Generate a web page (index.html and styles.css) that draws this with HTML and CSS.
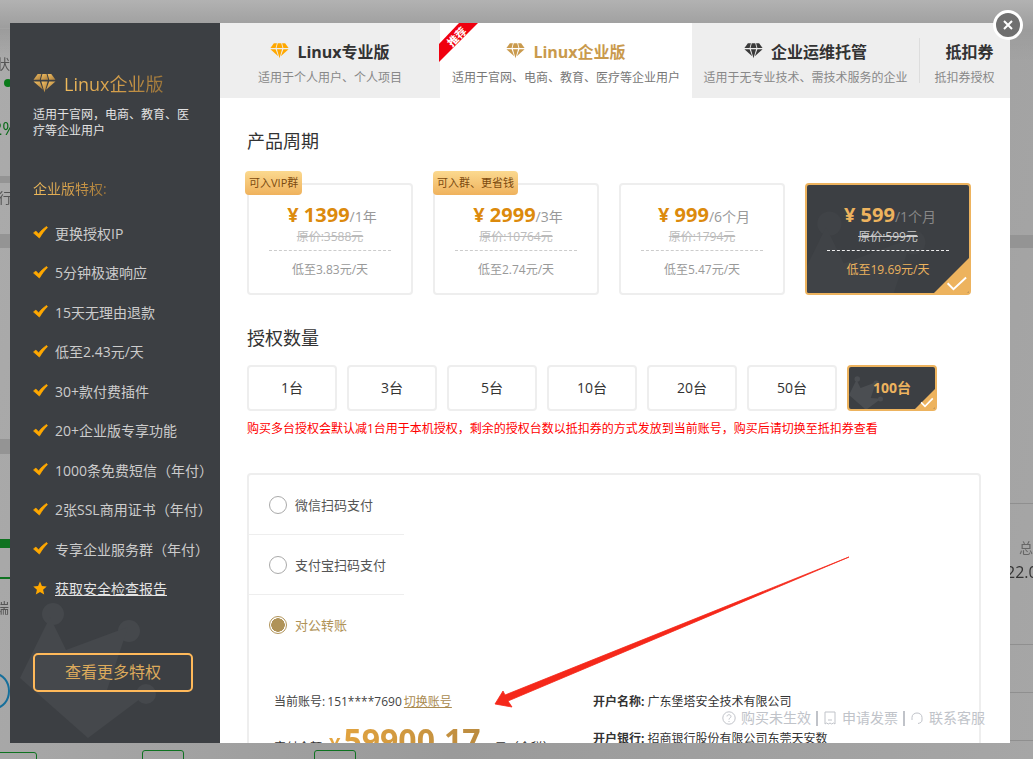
FILE: index.html
```html
<!DOCTYPE html>
<html lang="zh-CN">
<head>
  <meta charset="UTF-8">
  <title>Linux企业版</title>
  <link rel="stylesheet" href="styles.css">
</head>
<body>
  <svg class="defs" width="0" height="0">
    <defs>
      <linearGradient id="gold" x1="0" y1="0" x2="1" y2="1">
        <stop offset="0" stop-color="#f4c062"/>
        <stop offset="1" stop-color="#a87c3c"/>
      </linearGradient>
      <symbol id="gem" viewBox="1 1 22 18">
        <path d="M5.5 1 1.5 6.5H7.5L9 1Z"/>
        <path d="M10 1H14L15.5 6.5H8.5Z"/>
        <path d="M15 1H18.5L22.5 6.5H16.5Z"/>
        <path d="M1.5 8H7.5L10.5 16Z"/>
        <path d="M9 8H15L12 18.5Z"/>
        <path d="M16.5 8H22.5L13.5 16Z"/>
      </symbol>
      <symbol id="tick" viewBox="0 0 16 14">
        <path d="M0.5 7.5 3 5.5 6 8.5C8 5.5 11 3 14.5 0.5L15.5 1.8C12 5 9.5 8.5 6.8 13Z"/>
      </symbol>
      <symbol id="crown" viewBox="0 0 136 135">
        <circle cx="33" cy="11" r="11"/>
        <circle cx="109" cy="28" r="11"/>
        <circle cx="126" cy="91" r="10"/>
        <path d="M0 75 30 14 46 47 108 24 87 87 128 90 68 135Z"/>
      </symbol>
    </defs>
  </svg>

  <!-- page behind the dialog -->
  <div class="backdrop">
    <span class="bg-line bg-l1"></span>
    <span class="bg-band bg-b1"></span>
    <span class="bg-band bg-b2"></span>
    <span class="bg-band bg-b3"></span>
    <span class="bg-band bg-b4"></span>
    <span class="bg-line bg-r1"></span>
    <span class="bg-line bg-r2"></span>
    <span class="bg-line bg-r3"></span>
    <span class="bg-line bg-r4"></span>
    <span class="bg-text bg-t1">状</span>
    <span class="bg-dot"></span>
    <span class="bg-text bg-t2">2%</span>
    <span class="bg-text bg-t3">行</span>
    <span class="bg-text bg-t4">端</span>
    <span class="bg-text bg-t5">总</span>
    <span class="bg-text bg-t6">22.0</span>
    <span class="bg-green bg-g1"></span>
    <span class="bg-green bg-g2"></span>
    <span class="bg-ring"></span>
    <span class="bg-btn bg-btn1"></span>
    <span class="bg-btn bg-btn2"></span>
    <span class="bg-btn bg-btn3"></span>
  </div>

  <div class="overlay">
    <div class="modal">
      <aside class="sidebar">
        <svg class="side-crown"><use href="#crown"/></svg>
        <div class="side-title">
          <svg class="gem gem-side"><use href="#gem"/></svg>
          <span class="gold-text">Linux企业版</span>
        </div>
        <p class="side-desc">适用于官网，电商、教育、医疗等企业用户</p>
        <div class="side-head gold-text">企业版特权:</div>
        <ul class="perks">
          <li><svg class="tick"><use href="#tick"/></svg>更换授权IP</li>
          <li><svg class="tick"><use href="#tick"/></svg>5分钟极速响应</li>
          <li><svg class="tick"><use href="#tick"/></svg>15天无理由退款</li>
          <li><svg class="tick"><use href="#tick"/></svg>低至2.43元/天</li>
          <li><svg class="tick"><use href="#tick"/></svg>30+款付费插件</li>
          <li><svg class="tick"><use href="#tick"/></svg>20+企业版专享功能</li>
          <li><svg class="tick"><use href="#tick"/></svg>1000条免费短信（年付）</li>
          <li><svg class="tick"><use href="#tick"/></svg>2张SSL商用证书（年付）</li>
          <li><svg class="tick"><use href="#tick"/></svg>专享企业服务群（年付）</li>
          <li>
            <svg class="star" viewBox="0 0 24 24"><path d="M12 1 15.3 8.6 23.5 9.4 17.3 14.8 19.2 23 12 18.7 4.8 23 6.7 14.8 0.5 9.4 8.7 8.6Z"/></svg>
            <a class="perk-link">获取安全检查报告</a>
          </li>
        </ul>
        <div class="more-btn">查看更多特权</div>
      </aside>

      <main class="main">
        <nav class="tabs">
          <div class="tab tab-pro">
            <div class="tab-title"><svg class="gem gem-orange"><use href="#gem"/></svg>Linux专业版</div>
            <div class="tab-sub">适用于个人用户、个人项目</div>
          </div>
          <div class="tab tab-ent active">
            <div class="ribbon"><span>推荐</span></div>
            <div class="tab-title"><svg class="gem gem-gold"><use href="#gem"/></svg>Linux企业版</div>
            <div class="tab-sub">适用于官网、电商、教育、医疗等企业用户</div>
          </div>
          <div class="tab tab-ops">
            <div class="tab-title"><svg class="gem gem-dark"><use href="#gem"/></svg>企业运维托管</div>
            <div class="tab-sub">适用于无专业技术、需技术服务的企业</div>
          </div>
          <div class="tab tab-coupon">
            <div class="tab-title">抵扣券</div>
            <div class="tab-sub">抵扣券授权</div>
          </div>
        </nav>

        <div class="content">
          <h3 class="sec-title">产品周期</h3>
          <div class="cards">
            <div class="card">
              <span class="tag">可入VIP群</span>
              <div class="price"><b>¥ 1399</b>/1年</div>
              <div class="origin">原价:3588元</div>
              <div class="daily">低至3.83元/天</div>
            </div>
            <div class="card">
              <span class="tag tag-wide">可入群、更省钱</span>
              <div class="price"><b>¥ 2999</b>/3年</div>
              <div class="origin">原价:10764元</div>
              <div class="daily">低至2.74元/天</div>
            </div>
            <div class="card">
              <div class="price"><b>¥ 999</b>/6个月</div>
              <div class="origin">原价:1794元</div>
              <div class="daily">低至5.47元/天</div>
            </div>
            <div class="card selected">
              <svg class="card-crown"><use href="#crown"/></svg>
              <div class="price"><b>¥ 599</b>/1个月</div>
              <div class="origin">原价:599元</div>
              <div class="daily">低至19.69元/天</div>
              <svg class="corner" viewBox="0 0 36 36">
                <path class="corner-bg" d="M36 0V36H0Z"/>
                <path class="corner-check" d="M14 26 20 32 33 20"/>
              </svg>
            </div>
          </div>

          <h3 class="sec-title sec-count">授权数量</h3>
          <div class="counts">
            <div class="count">1台</div>
            <div class="count">3台</div>
            <div class="count">5台</div>
            <div class="count">10台</div>
            <div class="count">20台</div>
            <div class="count">50台</div>
            <div class="count selected">
              <svg class="count-crown"><use href="#crown"/></svg>
              <span>100台</span>
              <svg class="corner corner-sm" viewBox="0 0 36 36">
                <path class="corner-bg" d="M36 0V36H0Z"/>
                <path class="corner-check" d="M11 24 18 31 32 17"/>
              </svg>
            </div>
          </div>
          <p class="notice">购买多台授权会默认减1台用于本机授权，剩余的授权台数以抵扣券的方式发放到当前账号，购买后请切换至抵扣券查看</p>

          <section class="pay-box">
            <div class="methods">
              <div class="method"><i class="radio"></i>微信扫码支付</div>
              <div class="method"><i class="radio"></i>支付宝扫码支付</div>
              <div class="method on"><i class="radio"></i>对公转账</div>
            </div>
            <div class="transfer">
              <div class="transfer-left">
                <div class="account">当前账号: 151****7690 <a class="switch">切换账号</a></div>
                <div class="amount">
                  <span class="amount-label">实付金额</span>
                  <span class="amount-num"><em>¥</em>59900.17</span>
                  <span class="amount-unit">元（含税）</span>
                </div>
              </div>
              <div class="transfer-right">
                <div class="bank-row"><b>开户名称:</b> 广东堡塔安全技术有限公司</div>
                <div class="bank-row"><b>开户银行:</b> 招商银行股份有限公司东莞天安数码城支行</div>
              </div>
            </div>
          </section>
        </div>
      </main>

      <svg class="arrow" viewBox="0 0 1000 720">
        <path d="M839 534 495 672 493 668 485 681 502 684 498 678Z"/>
      </svg>

      <div class="help-links">
        <span class="help"><svg viewBox="0 0 14 14"><circle cx="7" cy="7" r="6.2"/><path d="M5 5.4C5 3.2 9 3.2 9 5.4 9 7 7 6.8 7 8.6M7 10V11"/></svg>购买未生效</span>
        <i class="sep"></i>
        <span class="help"><svg viewBox="0 0 14 14"><path d="M2 1H12V13L10.4 12 8.7 13 7 12 5.3 13 3.6 12 2 13ZM5 9H9"/></svg>申请发票</span>
        <i class="sep"></i>
        <span class="help"><svg viewBox="0 0 14 14"><path d="M2 9V6.5C2 0.5 12 0.5 12 6.5V9C12 11 10.5 12 8 12.5"/></svg>联系客服</span>
      </div>

      <div class="close">
        <svg viewBox="0 0 12 12"><path d="M2 2 10 10M10 2 2 10"/></svg>
      </div>
    </div>
  </div>
</body>
</html>
```

FILE: styles.css
```css
* {
  box-sizing: border-box;
}

html, body {
  height: 100%;
}

body {
  margin: 0;
  overflow: hidden;
  font-family: "Open Sans", "Noto Sans CJK SC", sans-serif;
  color: #333;
  background: linear-gradient(100deg, #ababab 0%, #9a9a9a 50%, #a6a6a6 100%);
}

.defs {
  position: absolute;
}

/* backdrop */
.backdrop {
  position: fixed;
  inset: 0;
  background: linear-gradient(180deg, #b2b2b2 0, #9c9c9c 30px, transparent 60px);
}

.backdrop span {
  position: absolute;
}

.bg-line {
  height: 1px;
  background: #8f8f8f;
}

.bg-l1 { left: 0; top: 28px; width: 10px; background: #a2a2a2; }
.bg-r1 { left: 1010px; top: 503px; width: 23px; }
.bg-r2 { left: 1010px; top: 644px; width: 23px; }
.bg-r3 { left: 1010px; top: 692px; width: 23px; }
.bg-r4 { left: 1010px; top: 740px; width: 23px; }

.bg-band {
  background: #949494;
}

.bg-b1 { left: 0; top: 176px; width: 10px; height: 7px; }
.bg-b2 { left: 0; top: 234px; width: 10px; height: 14px; }
.bg-b3 { left: 0; top: 439px; width: 10px; height: 15px; }
.bg-b4 { left: 1010px; top: 235px; width: 23px; height: 13px; }

.bg-text {
  font-size: 14px;
  line-height: 20px;
  color: #555;
}

.bg-t1 { left: -4px; top: 54px; }
.bg-t2 { left: -8px; top: 116px; font-size: 18px; line-height: 24px; color: #0d6b1c; }
.bg-t3 { left: -2px; top: 188px; }
.bg-t4 { left: -5px; top: 598px; }
.bg-t5 { left: 1019px; top: 538px; color: #666; }
.bg-t6 { left: 1006px; top: 561px; font-size: 16px; line-height: 22px; color: #333; }

.bg-dot {
  left: 4px;
  top: 79px;
  width: 8px;
  height: 8px;
  border-radius: 50%;
  background: #0a7a1a;
}

.bg-green {
  background: #0e7220;
}

.bg-g1 { left: 0; top: 539px; width: 10px; height: 9px; }
.bg-g2 { left: 0; top: 577px; width: 10px; height: 2px; }

.bg-ring {
  left: -20px;
  top: 673px;
  width: 30px;
  height: 36px;
  border: 2px solid #166f9b;
  border-radius: 50%;
}

.bg-btn {
  height: 20px;
  border: 1px solid #0e7220;
  border-radius: 3px;
}

.bg-btn1 { left: -8px; top: 752px; width: 45px; }
.bg-btn2 { left: 142px; top: 750px; width: 42px; }
.bg-btn3 { left: 314px; top: 750px; width: 42px; }

/* dialog */
.overlay {
  position: fixed;
  inset: 0;
  display: flex;
  align-items: flex-start;
  padding: 23px 0 0 10px;
}

.modal {
  position: relative;
  display: flex;
  width: 1000px;
  height: 720px;
  background: #fff;
}

.sidebar {
  position: relative;
  width: 210px;
  flex: none;
  padding: 46px 23px 0;
  overflow: hidden;
  background: #3c3f43;
  color: #ddd;
}

.side-crown {
  position: absolute;
  left: 10px;
  bottom: 5px;
  width: 136px;
  height: 135px;
  fill: #45484c;
}

.gold-text {
  background: linear-gradient(100deg, #f2bd5d 0%, #d49e4a 55%, #9b7439 100%);
  -webkit-background-clip: text;
  background-clip: text;
  color: transparent;
}

.side-title {
  display: flex;
  align-items: center;
  gap: 8px;
  height: 28px;
  font-size: 18px;
}

.gem {
  flex: none;
  fill: currentColor;
}

.gem-side {
  width: 23px;
  height: 19px;
  fill: url(#gold);
}

.side-desc {
  position: relative;
  margin: 10px 0 0;
  font-size: 12px;
  line-height: 16px;
  color: #e2e2e2;
}

.side-head {
  display: inline-block;
  margin-top: 40px;
  font-size: 14px;
  line-height: 20px;
}

.perks {
  position: relative;
  margin: 14px -15px 0 0;
  padding: 0;
  list-style: none;
  font-size: 14px;
  color: #ccc;
}

.perks li {
  display: flex;
  align-items: center;
  height: 39.5px;
  white-space: nowrap;
}

.tick {
  flex: none;
  width: 15px;
  height: 13px;
  margin-right: 7px;
  fill: #ffa800;
  stroke: #ffa800;
  stroke-width: 0.8;
}

.star {
  flex: none;
  width: 14px;
  height: 14px;
  margin-right: 8px;
  fill: #ffa800;
}

.perk-link {
  color: #e4e4e4;
  text-decoration: underline;
}

.more-btn {
  position: relative;
  width: 160px;
  height: 39px;
  margin-top: 45px;
  border: 2px solid #ffb95a;
  border-radius: 5px;
  font-size: 16px;
  line-height: 35px;
  text-align: center;
  color: #dcaa5c;
}

.main {
  flex: 1;
  min-width: 0;
  overflow: hidden;
}

/* tabs */
.tabs {
  display: flex;
  height: 75px;
  background: #eee;
}

.tab {
  position: relative;
  flex: none;
  text-align: center;
}

.tab-pro { width: 220px; }
.tab-ent { width: 252px; }
.tab-ops { width: 227px; }
.tab-coupon { width: 91px; }

.tab-coupon::before {
  content: "";
  position: absolute;
  left: 0;
  top: 15px;
  height: 45px;
  border-left: 1px solid #ddd;
}

.tab-coupon .tab-title {
  padding-left: 10px;
}

.tab.active {
  background: #fff;
}

.tab-title {
  display: flex;
  align-items: center;
  justify-content: center;
  gap: 8px;
  margin-top: 16px;
  height: 24px;
  font-size: 16px;
  font-weight: 700;
  color: #333;
}

.active .tab-title {
  color: #c99a4d;
}

.tab-sub {
  margin-top: 5px;
  font-size: 12px;
  line-height: 20px;
  color: #888;
  white-space: nowrap;
}

.active .tab-sub {
  color: #777;
}

.tabs .gem {
  width: 19px;
  height: 16px;
}

.gem-orange { fill: #ffa800; }
.tabs .gem-gold { fill: #c99a4d; }
.gem-dark { fill: #3a3a3a; }

.ribbon {
  position: absolute;
  left: -1px;
  top: 0;
  width: 39px;
  height: 39px;
  background: #f0000f;
  clip-path: polygon(0 21px, 20px 0, 39px 0, 0 39px);
}

.ribbon span {
  position: absolute;
  left: 6px;
  top: 6px;
  width: 24px;
  font-size: 11px;
  line-height: 16px;
  font-weight: 700;
  color: #fff;
  white-space: nowrap;
  transform: rotate(-45deg);
}

/* content */
.content {
  padding: 31px 29px 0 27px;
}

.sec-title {
  margin: 0;
  font-size: 18px;
  line-height: 24px;
  font-weight: 400;
  color: #333;
}

.sec-count {
  margin-top: 31px;
}

.cards {
  display: flex;
  gap: 20px;
  margin-top: 30px;
}

.card {
  position: relative;
  width: 166px;
  height: 112px;
  padding-top: 17px;
  border: 2px solid #eee;
  border-radius: 4px;
  text-align: center;
}

.tag {
  position: absolute;
  left: -4px;
  top: -14px;
  height: 24px;
  padding: 0 4px;
  border-radius: 4px;
  background: linear-gradient(180deg, #fbd98f, #efb25d);
  font-size: 11px;
  line-height: 24px;
  color: #7c4a0e;
  white-space: nowrap;
}

.tag-wide {
  left: -2px;
}

.price {
  position: relative;
  height: 28px;
  padding-left: 4px;
  font-size: 14px;
  line-height: 26px;
  color: #999;
}

.price b {
  font-size: 20px;
  color: #dc8a0c;
}

.origin {
  position: relative;
  height: 14px;
  font-size: 12px;
  line-height: 14px;
  color: #bbb;
  text-decoration: line-through;
}

.daily {
  position: relative;
  width: 122px;
  margin: 6px auto 0;
  padding-top: 10px;
  border-top: 1px dashed #ccc;
  font-size: 12px;
  line-height: 18px;
  color: #999;
}

.card.selected {
  overflow: hidden;
  border-color: #edb35e;
  background: #3c3f43;
}

.card-crown {
  position: absolute;
  left: -14px;
  top: 26px;
  width: 150px;
  height: 150px;
  fill: #404347;
}

.selected .price { color: #888; }
.selected .price b { color: #edb35e; }
.selected .origin { color: #ccc; }
.selected .daily { border-color: #eee; color: #edb35e; }

.corner {
  position: absolute;
  right: 0;
  bottom: 0;
  width: 35px;
  height: 35px;
}

.corner-bg {
  fill: #edb35e;
}

.corner-check {
  fill: none;
  stroke: #fff;
  stroke-width: 2;
}

.corner-sm {
  width: 20px;
  height: 20px;
}

.corner-sm .corner-check {
  stroke-width: 3;
}

.counts {
  display: flex;
  gap: 10px;
  margin-top: 15px;
}

.count {
  position: relative;
  width: 90px;
  height: 46px;
  border: 2px solid #eee;
  border-radius: 4px;
  font-size: 14px;
  line-height: 42px;
  text-align: center;
  color: #333;
}

.count.selected {
  overflow: hidden;
  border-color: #edb35e;
  background: #3c3f43;
  font-weight: 700;
  color: #edb35e;
}

.count span {
  position: relative;
}

.count-crown {
  position: absolute;
  left: 0;
  top: 9px;
  width: 34px;
  height: 34px;
  fill: #4b4e52;
}

.notice {
  margin: 8px 0 0;
  font-size: 12px;
  line-height: 20px;
  color: #f00;
  white-space: nowrap;
}

/* payment */
.pay-box {
  height: 300px;
  margin-top: 34px;
  border: 2px solid #eee;
  border-radius: 4px;
}

.method {
  display: flex;
  align-items: center;
  width: 155px;
  height: 60px;
  padding-left: 20px;
  border-bottom: 1px solid #eee;
  font-size: 13px;
  color: #555;
  white-space: nowrap;
}

.method.on {
  height: 59px;
  border-bottom: 0;
  color: #b09358;
}

.radio {
  flex: none;
  width: 18px;
  height: 18px;
  margin-right: 8px;
  border: 1px solid #aaa;
  border-radius: 50%;
}

.on .radio {
  border-color: #b09358;
  background: radial-gradient(circle, #b09358 0 6.5px, #fff 7px);
}

.transfer {
  display: flex;
  margin-top: 38px;
  padding-left: 25px;
  font-size: 12px;
  color: #333;
}

.transfer-left {
  width: 319px;
  flex: none;
}

.account {
  line-height: 20px;
  color: #444;
  word-spacing: -1px;
}

.switch {
  color: #a98a50;
  text-decoration: underline;
}

.amount {
  display: flex;
  align-items: baseline;
  height: 44px;
  margin-top: 6px;
  line-height: 44px;
}

.amount-label {
  margin-right: 7px;
}

.amount-num {
  margin-right: 14px;
  font-size: 32px;
  font-weight: 700;
  background: linear-gradient(100deg, #e6a63f, #b98a40);
  -webkit-background-clip: text;
  background-clip: text;
  color: transparent;
}

.amount-num em {
  margin-right: 3px;
  font-size: 20px;
  font-style: normal;
}

.transfer-right {
  width: 240px;
}

.bank-row {
  line-height: 20px;
  margin-bottom: 17px;
}

/* things lying over the dialog */
.arrow {
  position: absolute;
  left: 0;
  top: 0;
  width: 1000px;
  height: 720px;
  pointer-events: none;
  fill: #f5281a;
  stroke: #f5281a;
  stroke-width: 0.8;
}

.help-links {
  position: absolute;
  right: 25px;
  top: 685px;
  display: flex;
  align-items: center;
  gap: 5px;
  font-size: 14px;
  line-height: 20px;
  color: #c0c3c9;
}

.help {
  display: flex;
  align-items: center;
  gap: 5px;
}

.help svg {
  width: 14px;
  height: 14px;
  fill: none;
  stroke: #c0c3c9;
  stroke-width: 1;
}

.sep {
  width: 2px;
  height: 15px;
  background: #c0c3c9;
}

.close {
  position: absolute;
  right: -13px;
  top: -13px;
  width: 30px;
  height: 30px;
  padding: 6px;
  border: 3px solid #fff;
  border-radius: 50%;
  background: #707070;
}

.close svg {
  display: block;
  fill: none;
  stroke: #fff;
  stroke-width: 2;
}
```
